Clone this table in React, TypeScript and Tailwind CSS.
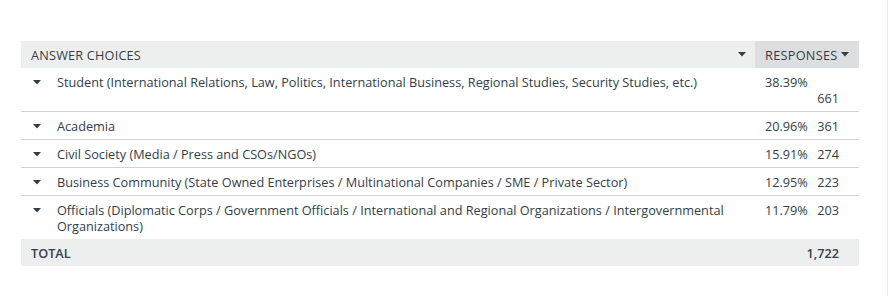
import React from "react";

const rows = [
  {
    label:
      "Student (International Relations, Law, Politics, International Business, Regional Studies, Security Studies, etc.)",
    pct: "38.39%",
    count: "661",
    wrap: true,
  },
  { label: "Academia", pct: "20.96%", count: "361" },
  { label: "Civil Society (Media / Press and CSOs/NGOs)", pct: "15.91%", count: "274" },
  {
    label:
      "Business Community (State Owned Enterprises / Multinational Companies / SME / Private Sector)",
    pct: "12.95%",
    count: "223",
  },
  {
    label:
      "Officials (Diplomatic Corps / Government Officials / International and Regional Organizations / Intergovernmental Organizations)",
    pct: "11.79%",
    count: "203",
  },
];

const Caret = ({ className }: { className?: string }) => (
  <svg width="8" height="5" viewBox="0 0 8 5" className={className}>
    <path d="M0 0 L8 0 L4 4.5 Z" fill="#333e48" />
  </svg>
);

const App = () => {
  return (
    <div
      className="w-[892px] h-[296px] bg-white flex text-[#333e48]"
      style={{ fontFamily: "'Open Sans', 'Liberation Sans', sans-serif" }}
    >
      <div className="flex-1 pl-[21px] pr-[27px] pt-[41px]">
        <div className="w-[838px] text-[12.7px] leading-[16px]">
          {/* header */}
          <div className="flex h-[27px]">
            <div className="flex-1 bg-[#edeeee] flex items-center pl-[10px] pr-[9px]">
              <span className="flex-1 uppercase tracking-[0.2px]">Answer Choices</span>
              <Caret />
            </div>
            <div className="w-[104px] bg-[#dcdedf] flex items-center pl-[10px]">
              <span className="uppercase tracking-[0.3px]">Responses</span>
              <Caret className="ml-[3px]" />
            </div>
          </div>
          {/* rows */}
          {rows.map((r, i) => (
            <div
              key={i}
              className={`flex ${i < rows.length - 1 ? "border-b border-[#d0d2d3]" : ""}`}
            >
              <div className="flex-1 flex pl-[12px] pt-[6px] pb-[5px] pr-[8px]">
                <Caret className="mt-[6px] mr-[16px] shrink-0" />
                <span>{r.label}</span>
              </div>
              <div className="w-[104px] pl-[10px] pt-[6px] pb-[5px] pr-[20px]">
                {r.wrap ? (
                  <>
                    <div>{r.pct}</div>
                    <div className="text-right">{r.count}</div>
                  </>
                ) : (
                  <div className="flex justify-between">
                    <span>{r.pct}</span>
                    <span>{r.count}</span>
                  </div>
                )}
              </div>
            </div>
          ))}
          {/* total */}
          <div className="flex h-[27px] bg-[#edeeee] items-center">
            <div className="flex-1 pl-[10px] font-semibold">TOTAL</div>
            <div className="w-[104px] pr-[20px] text-right font-semibold">1,722</div>
          </div>
        </div>
      </div>
      <div className="w-[5px] border-l border-[#ececec]" />
    </div>
  );
};

export default App;
